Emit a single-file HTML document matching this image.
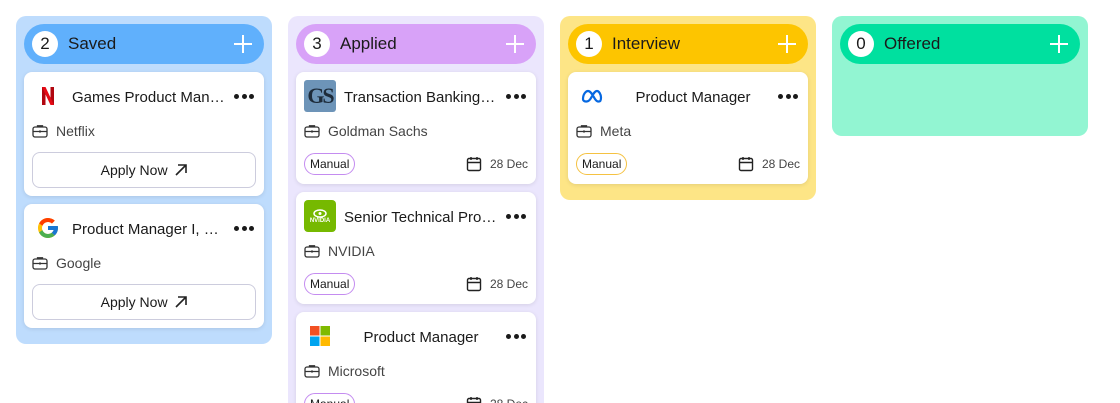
<!DOCTYPE html>
<html><head><meta charset="utf-8"><style>
*{box-sizing:border-box;margin:0;padding:0}
html,body{width:1120px;height:403px;overflow:hidden}
body{background:#fff;font-family:"Liberation Sans",sans-serif;position:relative;color:#1a1a1a}
.col{position:absolute;top:16px;width:256px;border-radius:10px;padding:8px}
.hd{height:40px;border-radius:20px;position:relative;margin-bottom:8px}
.num{position:absolute;left:8px;top:7px;width:26px;height:26px;border-radius:50%;background:#fff;text-align:center;line-height:26px;font-size:17px}
.hd .t{position:absolute;left:44px;top:0;line-height:40px;font-size:17px}
.plus{position:absolute;right:12px;top:11px;width:18px;height:18px}
.plus:before,.plus:after{content:"";position:absolute;background:#fff}
.plus:before{left:8px;top:0;width:2px;height:18px}
.plus:after{top:8px;left:0;height:2px;width:18px}
.card{background:#fff;border-radius:8px;position:relative;margin-bottom:8px;box-shadow:0 1px 4px rgba(0,0,0,.1)}
.logo{position:absolute;left:8px;top:8px;width:32px;height:32px;display:flex;align-items:center;justify-content:center}
.title{position:absolute;left:48px;top:10px;width:154px;line-height:32px;font-size:15px;white-space:nowrap;overflow:hidden;text-overflow:ellipsis;text-align:center}
.dots{position:absolute;right:10px;top:22px;width:20px;height:5px}
.dots i{position:absolute;top:0;width:5px;height:5px;border-radius:50%;background:#1a1a1a}
.co{position:absolute;left:8px;top:48px;height:22px;line-height:22px;font-size:14px;color:#444;padding-left:24px}
.bag{position:absolute;left:0;top:4px}
.btn{position:absolute;left:8px;right:8px;top:80px;height:36px;border:1px solid #ccd;border-radius:8px;text-align:center;line-height:34px;font-size:14px}
.tag{position:absolute;left:8px;top:81px;height:22px;border-radius:11px;padding:0 5px;line-height:20px;font-size:12px;border:1px solid}
.date{position:absolute;right:8px;top:81px;line-height:22px;font-size:12px;color:#444;padding-left:24px}
.cal{position:absolute;left:0;top:3px}
</style></head><body>
<svg width="0" height="0" style="position:absolute"><defs>
<symbol id="bag" viewBox="0 0 16 14"><rect x="1" y="3" width="14" height="10" rx="2" fill="none" stroke="#333" stroke-width="1.3"/><path d="M5.5 3V1.8h5V3M1 7.5h14" fill="none" stroke="#333" stroke-width="1.3"/><rect x="7" y="6.5" width="2" height="2" fill="#333"/></symbol>
<symbol id="cal" viewBox="0 0 16 16"><rect x="1.5" y="2.5" width="13" height="12" rx="1.5" fill="none" stroke="#222" stroke-width="1.4"/><path d="M1.5 6.5h13M5 1v3M11 1v3" stroke="#222" stroke-width="1.4"/></symbol>
</defs></svg>

<div class="col" style="left:16px;height:328px;background:#bedcfd">
<div class="hd" style="background:#60b0fc"><div class="num">2</div><div class="t">Saved</div><div class="plus"></div></div>
<div class="card" style="height:124px"><div class="logo"><svg width="12" height="18" viewBox="0 0 12 18"><path d="M0 0h3.5v18H0zM8.5 0H12v18H8.5z" fill="#b1060f"/><path d="M0 0h3.5l8.5 18H8.5z" fill="#e50914"/></svg></div><div class="title">Games Product Manager, Netflix</div><div class="dots"><i style="left:0"></i><i style="left:7.5px"></i><i style="left:15px"></i></div><div class="co"><svg class="bag" width="16" height="14"><use href="#bag"/></svg>Netflix</div><div class="btn">Apply Now &nbsp;<svg width="12" height="12" viewBox="0 0 12 12" style="vertical-align:-1px"><path d="M1 11L11 1M3 1h8v8" fill="none" stroke="#222" stroke-width="1.6"/></svg></div></div>
<div class="card" style="height:124px"><div class="logo"><svg width="24" height="24" viewBox="0 0 48 48"><path fill="#FFC107" d="M43.6 20H24v8h11.3C33.7 32.7 29.3 36 24 36c-6.6 0-12-5.4-12-12s5.4-12 12-12c3 0 5.8 1.1 7.9 3l5.7-5.7C34 6.1 29.3 4 24 4 13 4 4 13 4 24s9 20 20 20 20-9 20-20c0-1.3-.1-2.7-.4-4z"/><path fill="#FF3D00" d="M6.3 14.7l6.6 4.8C14.7 15.1 19 12 24 12c3 0 5.8 1.1 7.9 3l5.7-5.7C34 6.1 29.3 4 24 4 16.3 4 9.7 8.3 6.3 14.7z"/><path fill="#4CAF50" d="M24 44c5.2 0 9.9-2 13.4-5.2l-6.2-5.2C29.2 35.1 26.7 36 24 36c-5.2 0-9.6-3.3-11.3-8l-6.5 5C9.5 39.6 16.200 44 24 44z"/><path fill="#1976D2" d="M43.6 20H24v8h11.3c-.8 2.2-2.2 4.2-4.1 5.6l6.2 5.2C37 39.2 44 34 44 24c0-1.3-.1-2.7-.4-4z"/></svg></div><div class="title">Product Manager I, Google Play</div><div class="dots"><i style="left:0"></i><i style="left:7.5px"></i><i style="left:15px"></i></div><div class="co"><svg class="bag" width="16" height="14"><use href="#bag"/></svg>Google</div><div class="btn">Apply Now &nbsp;<svg width="12" height="12" viewBox="0 0 12 12" style="vertical-align:-1px"><path d="M1 11L11 1M3 1h8v8" fill="none" stroke="#222" stroke-width="1.6"/></svg></div></div>
</div>

<div class="col" style="left:288px;height:400px;background:#ebe6fd">
<div class="hd" style="background:#d8a2f8"><div class="num">3</div><div class="t">Applied</div><div class="plus"></div></div>
<div class="card" style="height:112px"><div class="logo" style="background:#6d94b8;border-radius:3px;font-family:'Liberation Serif',serif;font-weight:bold;font-size:22px;color:#1d2b3a;letter-spacing:-2px">GS</div><div class="title">Transaction Banking, Product Manager</div><div class="dots"><i style="left:0"></i><i style="left:7.5px"></i><i style="left:15px"></i></div><div class="co"><svg class="bag" width="16" height="14"><use href="#bag"/></svg>Goldman Sachs</div><div class="tag" style="border-color:#c48cf0">Manual</div><div class="date"><svg class="cal" width="16" height="16"><use href="#cal"/></svg>28 Dec</div></div>
<div class="card" style="height:112px"><div class="logo" style="background:#76b900;border-radius:4px;color:#fff;font-size:6px;font-weight:bold;flex-direction:column">
<svg width="14" height="9" viewBox="0 0 14 9"><ellipse cx="7" cy="4.5" rx="6" ry="3.5" fill="none" stroke="#fff" stroke-width="1.5"/><circle cx="7" cy="4.5" r="1.5" fill="#fff"/></svg>NVIDIA</div><div class="title">Senior Technical Product Manager</div><div class="dots"><i style="left:0"></i><i style="left:7.5px"></i><i style="left:15px"></i></div><div class="co"><svg class="bag" width="16" height="14"><use href="#bag"/></svg>NVIDIA</div><div class="tag" style="border-color:#c48cf0">Manual</div><div class="date"><svg class="cal" width="16" height="16"><use href="#cal"/></svg>28 Dec</div></div>
<div class="card" style="height:112px"><div class="logo"><svg width="20" height="20" viewBox="0 0 20 20"><rect width="9.5" height="9.5" fill="#f25022"/><rect x="10.5" width="9.5" height="9.5" fill="#7fba00"/><rect y="10.5" width="9.5" height="9.5" fill="#00a4ef"/><rect x="10.5" y="10.5" width="9.5" height="9.5" fill="#ffb900"/></svg></div><div class="title">Product Manager</div><div class="dots"><i style="left:0"></i><i style="left:7.5px"></i><i style="left:15px"></i></div><div class="co"><svg class="bag" width="16" height="14"><use href="#bag"/></svg>Microsoft</div><div class="tag" style="border-color:#c48cf0">Manual</div><div class="date"><svg class="cal" width="16" height="16"><use href="#cal"/></svg>28 Dec</div></div>
</div>

<div class="col" style="left:560px;height:184px;background:#fde586">
<div class="hd" style="background:#fdc500"><div class="num">1</div><div class="t">Interview</div><div class="plus"></div></div>
<div class="card" style="height:112px"><div class="logo"><svg width="22" height="14" viewBox="0 0 22 14"><path d="M2 10c0-5 3-8 5-8 3 0 5 5 7 8s3 2.5 4 2.5 2-1 2-4-2-6.5-4-6.5c-3 0-5 6-7 8.5S6 12.5 5 12.5 2 12 2 10z" fill="none" stroke="#0668e1" stroke-width="2.2"/></svg></div><div class="title">Product Manager</div><div class="dots"><i style="left:0"></i><i style="left:7.5px"></i><i style="left:15px"></i></div><div class="co"><svg class="bag" width="16" height="14"><use href="#bag"/></svg>Meta</div><div class="tag" style="border-color:#f5c242">Manual</div><div class="date"><svg class="cal" width="16" height="16"><use href="#cal"/></svg>28 Dec</div></div>
</div>

<div class="col" style="left:832px;height:120px;background:#92f5d2">
<div class="hd" style="background:#00e09f"><div class="num">0</div><div class="t">Offered</div><div class="plus"></div></div>
</div>
</body></html>
